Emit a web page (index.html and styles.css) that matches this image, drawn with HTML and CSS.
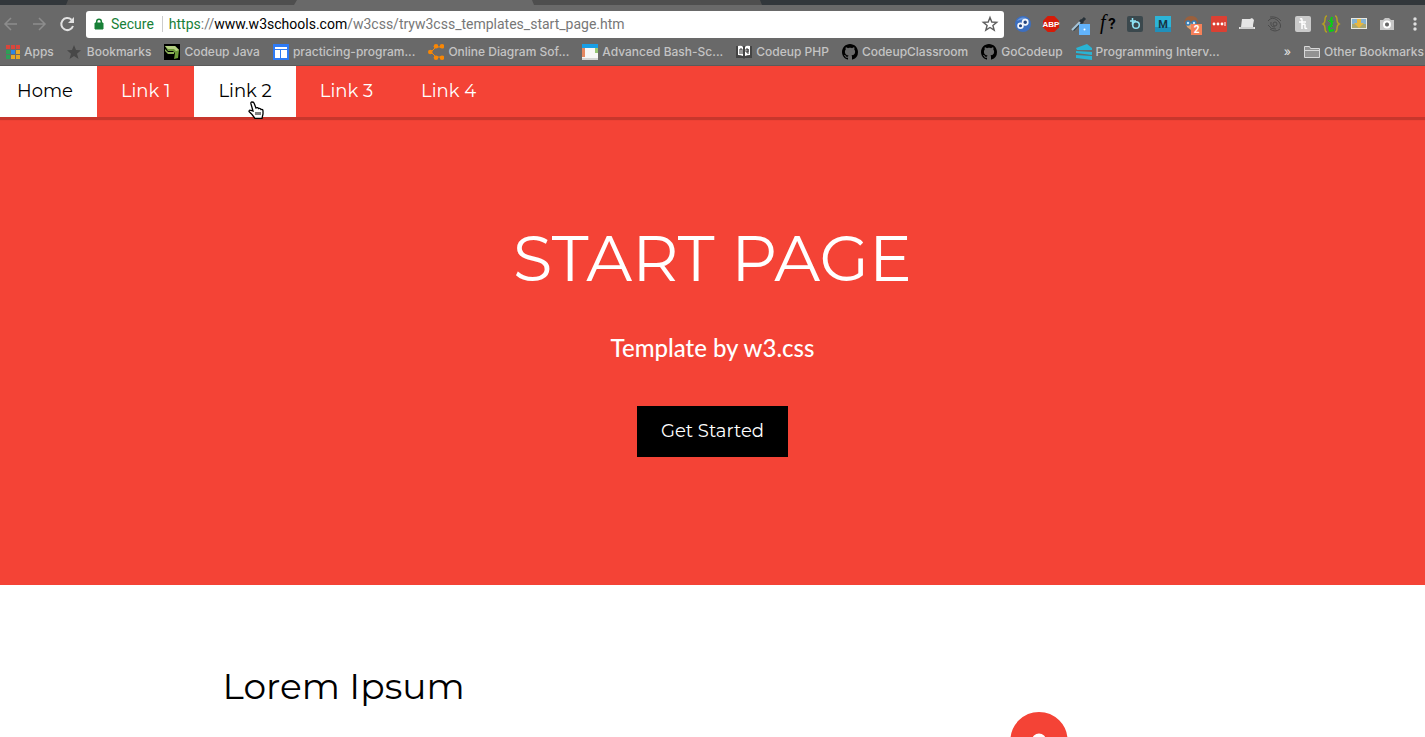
FILE: index.html
```
<!DOCTYPE html>
<html lang="en">
<head>
<meta charset="utf-8">
<title>Start Page</title>
<link rel="stylesheet" href="styles.css">
</head>
<body>
<div class="chrome">
  <div class="tabs">
    <svg class="tabs-left" viewBox="0 0 762 5"><path d="M68 0H760L762 5H66Z" fill="#4e4e4e"/><path d="M297 0H532L534 5H294Z" fill="#696969"/></svg>
  </div>
  <div class="toolbar">
    <div class="nav-buttons">
      <button class="icon-btn" aria-label="Back"><svg viewBox="0 0 16 16" fill="none" stroke="#8d8d8d" stroke-width="1.5"><path d="M13 8H1M7 2 1 8l6 6"/></svg></button>
      <button class="icon-btn" aria-label="Forward"><svg viewBox="0 0 16 16" fill="none" stroke="#8d8d8d" stroke-width="1.5"><path d="M1 8h12M7 2l6 6-6 6"/></svg></button>
      <button class="icon-btn" aria-label="Reload"><svg viewBox="0 0 16 16"><path d="M13 10A6 6 0 1 1 11.500 3.800" fill="none" stroke="#e2e2e2" stroke-width="2"/><path d="M14 1v6H8Z" fill="#e2e2e2"/></svg></button>
    </div>
    <div class="omnibox">
      <button class="secure"><svg class="lock" viewBox="0 0 10 12"><path d="M1 5h8v6H1Z" fill="#188038" stroke="#188038"/><path d="M2.7 5V3.5a2.3 2.3 0 0 1 4.6 0V5" fill="none" stroke="#188038" stroke-width="1.5"/></svg>Secure</button>
      <div class="url" role="textbox" aria-label="Address" contenteditable="true" spellcheck="false"><span class="scheme">https</span>://<span class="host">www.w3schools.com</span>/w3css/tryw3css_templates_start_page.htm</div>
      <button class="icon-btn" aria-label="Bookmark this page"><svg viewBox="0 0 16 16"><path d="M8 1.5 9.8 6l4.9.3-3.8 3.1 1.3 4.8L8 11.5l-4.2 2.7 1.3-4.8L1.3 6.3 6.2 6Z" fill="none" stroke="#5e5e5e" stroke-width="1.4"/></svg></button>
    </div>
    <div class="extensions">
      <button class="icon-btn" aria-label="Links"><svg viewBox="0 0 16 16"><circle cx="8" cy="8" r="8" fill="#3c6fc0"/><path d="M2 5a7 7 0 0 1 12 0Q8 2 2 5" fill="#6b99dc"/><g fill="#23427c" stroke="#f3f6fb" stroke-width="1.7"><circle cx="5.5" cy="9.8" r="2.4"/><circle cx="10.2" cy="6.2" r="2.6"/></g></svg></button>
      <button class="icon-btn" aria-label="Ad blocker"><svg viewBox="0 0 16 16"><path d="M4.7 0h6.6L16 4.7v6.6L11.3 16H4.7L0 11.3V4.7Z" fill="#d61b08"/><text x="8" y="11" class="abp">ABP</text></svg></button>
      <button class="icon-btn" aria-label="Color picker"><svg viewBox="0 0 16 16"><path d="m2 14 8-8" stroke="#31434d" stroke-width="3"/><path d="m1 14 9-9" stroke="#a9c4d6" stroke-width="2"/><path d="m9 4 3 3M11 5l3-3" stroke="#273239" stroke-width="3"/><path d="M8 8h11v11H8Z" fill="#62b3fa"/><circle cx="13.500" cy="13.500" r="1" fill="#fff"/></svg></button>
      <button class="icon-btn" aria-label="Font finder"><svg viewBox="0 0 16 16"><text x="1" y="13" class="ffont"><tspan class="ffont-f">f</tspan><tspan x="9">?</tspan></text></svg></button>
      <button class="icon-btn" aria-label="Bit"><svg viewBox="0 0 16 16"><rect width="16" height="16" rx="2" fill="#3b484d"/><path d="M5.500 2v7M3 5h6" stroke="#8ee4f6" stroke-width="1.500"/><circle cx="9" cy="9" r="3.300" fill="none" stroke="#8ee4f6" stroke-width="1.500"/></svg></button>
      <button class="icon-btn" aria-label="M"><svg viewBox="0 0 16 16"><path d="M0 0h16v16H0Z" fill="#2db4d7"/><path d="M0 11h16v5H0Z" fill="#2090bb"/><text x="8" y="12" class="mletter">M</text></svg></button>
      <button class="icon-btn" aria-label="Assistant"><svg viewBox="0 0 16 16"><path d="M1 7Q2 0 8 0q6 0 7 5l-2 8-6 1-5-5Z" fill="#9a603d"/><path d="M3 7h10l-2 6-3 1-4-3Z" fill="#dda677"/><g fill="#c9e4f5" stroke="#347cb5" stroke-width="1.500"><circle cx="5" cy="7" r="2"/><circle cx="11" cy="7" r="2"/></g><path d="M8 8h11v11H8Z" fill="#f58058"/><text x="13.500" y="17" class="badge">2</text></svg></button>
      <button class="icon-btn" aria-label="Passwords"><svg viewBox="0 0 16 16"><rect width="16" height="16" rx="1" fill="#db4033"/><g fill="#fff"><circle cx="3" cy="8" r="1.400"/><circle cx="7" cy="8" r="1.400"/><circle cx="11" cy="8" r="1.400"/><path d="M13.500 6h1v4h-1Z"/></g></svg></button>
      <button class="icon-btn" aria-label="Laptop"><svg viewBox="0 0 16 16"><path d="M3 3h8l2-1 2 2-1 5v2h2v2H0v-2h2Z" fill="#e5e5e5"/><path d="M1 12h14" stroke="#b8b8b8"/></svg></button>
      <button class="icon-btn" aria-label="Swirl"><svg viewBox="0 0 16 16" fill="none" stroke="#4b4b4b"><circle cx="8" cy="8" r="2"/><path d="M1 5q4-5 9-1t3 8M3 1q7-1 11 4M1 9q3 5 8 4M3 13q5 4 10 0M4 6q-1 5 4 5"/></svg></button>
      <button class="icon-btn" aria-label="Honey"><svg viewBox="0 0 16 16"><rect width="16" height="16" rx="2" fill="#cacaca"/><path d="M4 6h7M7 13V4q0-2-2-1M7 9q3-2 3 0v3q1 1 2 0" fill="none" stroke="#fff" stroke-width="1.500"/></svg></button>
      <button class="icon-btn" aria-label="JSON viewer"><svg viewBox="0 0 16 16" fill="none"><path d="M4 0Q2 0 2 4q0 3-2 4 2 1 2 4 0 4 2 4M12 0q2 0 2 4 0 3 2 4-2 1-2 4 0 4-2 4" stroke="#b3a020" stroke-width="1.500"/><path d="M9 1 8 4l1 4-3 4 1 3 4-1" stroke="#08d111" stroke-width="2"/><path d="m5 4 2 2 4-1M5 11l2-1 3 1" stroke="#08d111"/></svg></button>
      <button class="icon-btn" aria-label="Image downloader"><svg viewBox="0 0 16 16"><path d="M0 2h16v11H0Z" fill="#e9e9e1"/><path d="M1 3h14v5H1Z" fill="#84b2d3"/><path d="M1 8h14v4H1Z" fill="#aaa773"/><path d="M6 3h4v4h3l-5 5-5-5h3Z" fill="#e8b740"/></svg></button>
      <button class="icon-btn" aria-label="Screenshot"><svg viewBox="0 0 16 16"><path d="M1 4h3l2-2h4l2 2h3v10H1Z" fill="#c6c6c6"/><circle cx="8" cy="8.500" r="3" fill="none" stroke="#fff" stroke-width="2"/><circle cx="8" cy="8.500" r="2" fill="#666"/></svg></button>
      <button class="icon-btn" aria-label="Menu"><svg viewBox="0 0 16 16" fill="#e0e0e0"><circle cx="8" cy="3" r="1.700"/><circle cx="8" cy="8" r="1.700"/><circle cx="8" cy="13" r="1.700"/></svg></button>
    </div>
  </div>
  <div class="bookmarks">
    <a class="bookmark" href="#"><svg viewBox="0 0 16 16"><path d="M2 1h4v4H2Zm5 0h4v4H7Zm5 0h4v4h-4Z" fill="#d9463c"/><path d="M2 6h4v4H2Zm0 5h4v4H2Z" fill="#2e9e57"/><path d="M7 6h4v4H7Z" fill="#2d87e2"/><path d="M12 6h4v4h-4ZM7 11h4v4H7Zm5 0h4v4h-4Z" fill="#e8a724"/></svg>Apps</a>
    <a class="bookmark" href="#"><svg viewBox="0 0 16 16"><path d="m7 1 2 5 5 .3-4 3.400L11.500 15 7 12l-4.500 3L4 9.700 0 6.300 5 6Z" fill="#484848"/></svg>Bookmarks</a>
    <a class="bookmark" href="#"><svg viewBox="0 0 16 16"><path d="M0 0h16v16H0Z" fill="#000"/><path d="M1 2h10l4 4-1 8-4 1 1-6-2-2H4Z" fill="#6d9b3a"/><path d="M1 2h10l4 4-3 1-2-2H4Z" fill="#b5cf82"/><path d="m1 5 3 3h6v2H4L1 7Z" fill="#8eb35a"/></svg>Codeup Java</a>
    <a class="bookmark" href="#"><svg viewBox="0 0 16 16"><path d="M0 0h16v16H0Z" fill="#2e7af4"/><path d="M2 3h12v2H2Zm0 3h5v8H2Zm6 0h6v8H8Z" fill="#fff"/></svg>practicing-program...</a>
    <a class="bookmark" href="#"><svg viewBox="0 0 16 16" fill="#f98705"><path d="M3 8 8 3M3 8l5 5M8 3h6M8 13h6" stroke="#f98705" fill="none"/><circle cx="2.300" cy="8" r="2.300"/><circle cx="8" cy="2.300" r="2.300"/><circle cx="14" cy="2.300" r="2.300"/><circle cx="8" cy="13.700" r="2.300"/><circle cx="14" cy="13.700" r="2.300"/></svg>Online Diagram Sof...</a>
    <a class="bookmark" href="#"><svg viewBox="0 0 16 16"><path d="M0 0h16v16H0Z" fill="#f7f7f7"/><path d="M0 0h16v4H0Z" fill="#179ee5"/><path d="M0 4h3v9H0Z" fill="#e58963"/><path d="M13 4h3v5h-3Z" fill="#96c675"/><path d="M0 14h16v2H0Z" fill="#d4d4d4"/></svg>Advanced Bash-Sc...</a>
    <a class="bookmark" href="#"><svg viewBox="0 0 16 16"><path d="M0 2h16v12H9l-1 1-1-1H0Z" fill="#444"/><path d="M2 2q4-1 5 1v9q-2-1-5-1Zm12 0q-4-1-5 1v9q2-1 5-1Z" fill="#fff"/><path d="M4 10V5h2v5M12 5h-2v3h2V5v5" fill="none" stroke="#333"/></svg>Codeup PHP</a>
    <a class="bookmark" href="#"><svg viewBox="0 0 16 16"><path d="M8 0C3.580 0 0 3.580 0 8c0 3.540 2.290 6.530 5.470 7.590.4.070.55-.17.55-.38 0-.19-.01-.82-.01-1.490-2.010.37-2.530-.49-2.690-.94-.09-.23-.48-.94-.82-1.130-.28-.15-.68-.52-.01-.53.63-.01 1.080.58 1.230.82.72 1.210 1.870.87 2.330.66.070-.52.28-.87.51-1.070-1.780-.2-3.640-.89-3.640-3.950 0-.87.31-1.590.82-2.150-.08-.2-.36-1.020.08-2.120 0 0 .67-.21 2.200.82.640-.18 1.320-.27 2-.27s1.360.09 2 .27c1.530-1.040 2.200-.82 2.200-.82.440 1.100.160 1.920.080 2.120.51.56.82 1.270.82 2.150 0 3.070-1.870 3.750-3.650 3.950.29.25.54.73.54 1.480 0 1.070-.01 1.930-.01 2.200 0 .21.15.46.55.38A8 8 0 0 0 16 8c0-4.420-3.580-8-8-8Z"/></svg>CodeupClassroom</a>
    <a class="bookmark" href="#"><svg viewBox="0 0 16 16"><path d="M8 0C3.580 0 0 3.580 0 8c0 3.540 2.290 6.530 5.470 7.590.4.070.55-.17.55-.38 0-.19-.01-.82-.01-1.490-2.010.37-2.530-.49-2.690-.94-.09-.23-.48-.94-.82-1.130-.28-.15-.68-.52-.01-.53.63-.01 1.080.58 1.230.82.72 1.210 1.870.87 2.330.66.070-.52.28-.87.51-1.070-1.780-.2-3.640-.89-3.640-3.950 0-.87.31-1.590.82-2.150-.08-.2-.36-1.020.08-2.120 0 0 .67-.21 2.200.82.640-.18 1.320-.27 2-.27s1.360.09 2 .27c1.530-1.040 2.200-.82 2.200-.82.440 1.100.160 1.920.080 2.120.51.56.82 1.270.82 2.150 0 3.070-1.870 3.750-3.650 3.950.29.25.54.73.54 1.480 0 1.070-.01 1.930-.01 2.200 0 .21.15.46.55.38A8 8 0 0 0 16 8c0-4.420-3.580-8-8-8Z"/></svg>GoCodeup</a>
    <a class="bookmark" href="#"><svg viewBox="0 0 16 16" fill="#29b4d4"><path d="m0 4 11-4 5 4v2L1 6Zm0 3 16 1v3L0 9Zm0 4 16 1v4L0 14Z"/></svg>Programming Interv...</a>
    <button class="more" aria-label="More bookmarks">»</button>
    <a class="bookmark" href="#"><svg viewBox="0 0 16 16" fill="#929292" stroke="#d8d8d8"><path d="M.5 13.500v-11h5l1 2h9v9Z"/><path d="M1 6.500h14"/></svg>Other Bookmarks</a>
  </div>
</div>
<div class="page">
  <nav class="navbar">
    <a class="nav-link home" href="#">Home</a>
    <a class="nav-link" href="#">Link 1</a>
    <a class="nav-link hovered" href="#">Link 2<svg class="cursor" viewBox="0 0 16 18"><path d="M5 10 3 3q-.5-2 1-2T6 2l2 5q2-1 2.500.500 2-.5 2.500 1 2-.5 2 1.500v3l-1 4.500H7l-3-4-3-3q0-2 2-1Z" fill="#fff" stroke="#000" stroke-width="1.300"/><path d="M8 11v3M10 11v3M12 11v3" stroke="#000"/></svg></a>
    <a class="nav-link" href="#">Link 3</a>
    <a class="nav-link" href="#">Link 4</a>
  </nav>
  <header class="hero">
    <h1 class="hero-title">START PAGE</h1>
    <p class="tagline">Template by w3.css</p>
    <button class="cta">Get Started</button>
  </header>
  <main class="intro">
    <div class="content">
      <h2 class="intro-title">Lorem Ipsum</h2>
      <div class="intro-art"><svg class="anchor" viewBox="0 0 1792 1792"><path fill="#f44336" d="M960 256q0-26-19-45t-45-19-45 19-19 45 19 45 45 19 45-19 19-45zm832 928v352q0 22-20 30-8 2-12 2-12 0-23-9l-93-93q-119 143-318.500 226.500t-429.500 83.500-429.500-83.500-318.500-226.500l-93 93q-9 9-23 9-4 0-12-2-20-8-20-30v-352q0-14 9-23t23-9h352q22 0 30 20 8 19-7 35l-100 100q67 91 189.500 153.500t271.500 82.500v-647h-192q-26 0-45-19t-19-45v-128q0-26 19-45t45-19h192v-163q-58-34-93-92.500t-35-128.500q0-106 75-181t181-75 181 75 75 181q0 70-35 128.500t-93 92.500v163h192q26 0 45 19t19 45v128q0 26-19 45t-45 19h-192v647q149-20 271.500-82.500t189.500-153.500l-100-100q-15-16-7-35 8-20 30-20h352q14 0 23 9t9 23z"/></svg></div>
    </div>
  </main>
</div>
</body>
</html>
```
FILE: styles.css
```
* { box-sizing: border-box; }
body {
  margin: 0;
  height: 100vh;
  display: flex;
  flex-direction: column;
  overflow: hidden;
  background: #fff;
  font-family: Montserrat, Inter, sans-serif;
}
button { border: 0; padding: 0; background: none; font: inherit; color: inherit; }
a { color: inherit; text-decoration: none; }

.chrome {
  flex: none;
  background: #696969;
  border-bottom: 1px solid #5a5a5a;
  font-family: Inter, sans-serif;
}
.tabs { display: flex; height: 5px; background: #32373b; }
.tabs-left { width: 762px; height: 5px; flex: none; }
.toolbar { display: flex; align-items: center; height: 38px; padding: 0 2px 0 4px; }
.nav-buttons { display: flex; gap: 12px; width: 82px; }
.icon-btn { display: block; flex: none; width: 16px; height: 16px; }
.icon-btn svg { display: block; width: 100%; height: 100%; overflow: visible; }
.omnibox {
  flex: 1;
  display: flex;
  align-items: center;
  height: 27px;
  padding: 0 6px 0 8px;
  background: #fff;
  border-radius: 3px;
  font-family: Roboto, sans-serif;
  font-size: 14px;
}
.secure { display: flex; align-items: center; gap: 7px; padding-right: 8px; border-right: 1px solid #ccc; color: #188038; }
.lock { width: 10px; height: 12px; }
.url { flex: 1; padding-left: 6px; color: #777; outline: 0; white-space: nowrap; }
.scheme { color: #188038; }
.host { color: #000; }
.extensions { display: flex; gap: 12px; margin-left: 11px; }
.abp { font: bold 8px "Liberation Sans", sans-serif; fill: #fff; text-anchor: middle; }
.ffont { font: bold 14px Inter, sans-serif; }
.ffont-f { font: italic 20px "Liberation Serif", serif; }
.mletter { font: bold 11px Roboto, sans-serif; fill: #173445; text-anchor: middle; }
.badge { font: bold 10px Roboto, sans-serif; fill: #fff; text-anchor: middle; }

.bookmarks {
  display: flex;
  align-items: center;
  gap: 13px;
  height: 22px;
  padding: 0 1px 5px 4px;
  color: #c4c4c4;
  font-size: 12px;
  font-weight: 500;
  white-space: nowrap;
}
.bookmark { display: flex; align-items: center; gap: 4px; }
.bookmark svg { width: 16px; height: 16px; flex: none; }
.more { margin-left: auto; color: #ddd; }

.page { flex: 1; min-height: 0; overflow: hidden; background: #fff; }
.navbar {
  position: relative;
  display: flex;
  background: #f44336;
  color: #fff;
  font-size: 18px;
  line-height: 27px;
  box-shadow: 0 3px 1px rgba(0, 0, 0, .18);
}
.nav-link { padding: 12px 24px; }
.home { padding-left: 17px; background: #fff; color: #000; }
.hovered { position: relative; background: #fff; color: #000; }
.cursor { position: absolute; left: 54px; top: 35px; width: 16px; height: 18px; }
.hero {
  padding: 93px 16px 128px;
  background: #f44336;
  color: #fff;
  text-align: center;
}
.hero-title { margin: 0 0 24px; font-size: 64px; font-weight: 400; line-height: 96px; }
.tagline { margin: 0 0 40px; font: 500 24px/36px Lato, sans-serif; }
.cta { padding: 12px 24px; background: #000; color: #fff; font-size: 18px; line-height: 27px; }
.intro { padding: 64px 16px; }
.content { display: grid; grid-template-columns: 2fr 1fr; max-width: 980px; margin: 0 auto; }
.intro-title { margin: 10px 0; font-size: 36px; font-weight: 400; line-height: 54px; }
.intro-art { padding-top: 63px; text-align: center; }
.anchor { width: 200px; height: 200px; }
```
